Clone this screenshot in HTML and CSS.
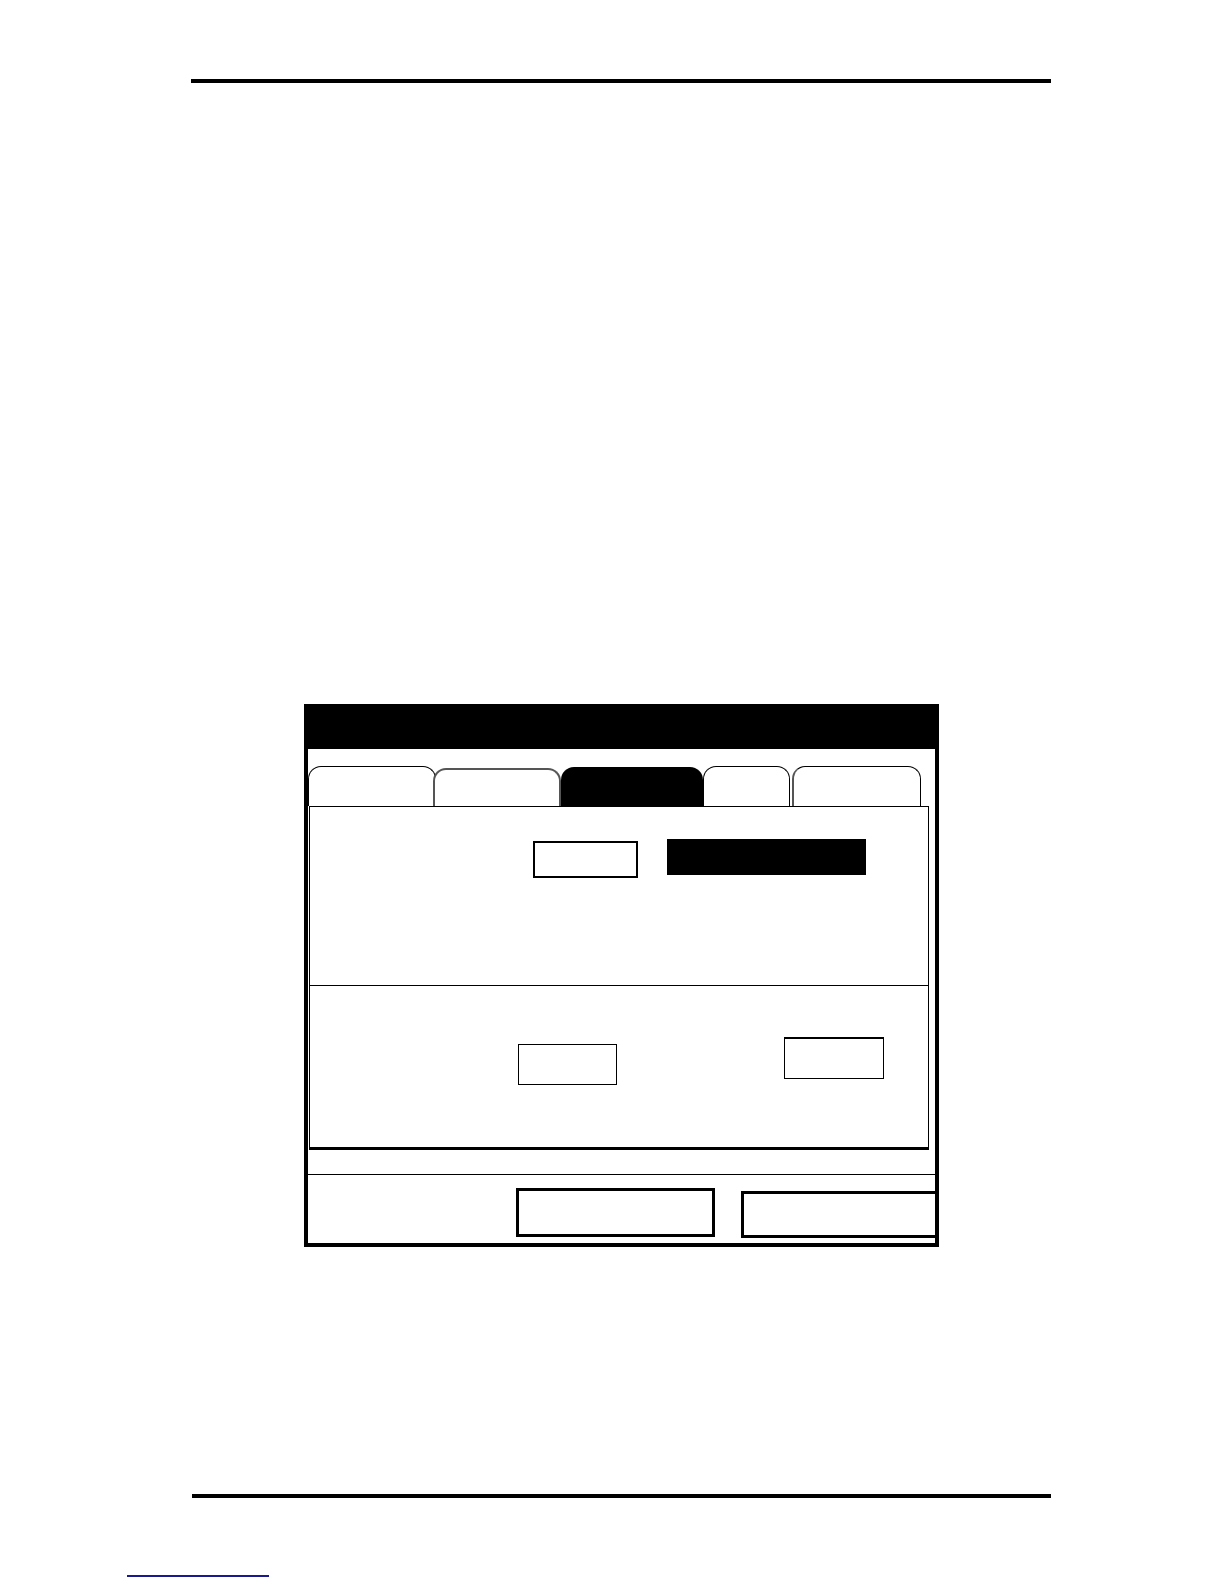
FILE: index.html
```html
<!DOCTYPE html>
<html lang="en">
<head>
<meta charset="utf-8">
<title>Dialog figure</title>
<link rel="stylesheet" href="styles.css">
</head>
<body>
<div class="page">
  <div class="rule rule-top"></div>
  <div class="dialog">
    <div class="title-bar"></div>
    <div class="frame">
      <div class="tabs">
        <div class="tab tab-1"></div>
        <div class="tab tab-2"></div>
        <div class="tab tab-3"></div>
        <div class="tab tab-4"></div>
        <div class="tab tab-5"></div>
      </div>
      <div class="panel">
        <div class="section upper">
          <div class="field field-1"></div>
          <div class="field-selected"></div>
        </div>
        <div class="section lower">
          <div class="field field-2"></div>
          <div class="field field-3"></div>
        </div>
      </div>
      <div class="status"></div>
      <div class="buttons">
        <div class="button button-1"></div>
        <div class="button button-2"></div>
      </div>
    </div>
  </div>
  <div class="rule rule-bottom"></div>
  <div class="link-line"></div>
</div>
</body>
</html>
```
FILE: styles.css
```css
* { box-sizing: border-box; }
html, body { margin: 0; padding: 0; background: #fff; }
body { font-family: "Liberation Sans", Arial, sans-serif; }
.page { width: 1224px; min-height: 1584px; padding-top: 79px; }

.rule { background: #000; }
.rule-top { margin-left: 191px; width: 860px; height: 4px; }
.rule-bottom { margin-top: 247px; margin-left: 192px; width: 859px; height: 3.5px; }
.link-line { margin-top: 77.5px; margin-left: 127px; width: 142px; height: 1.5px; background: #1a1a8e; }

.dialog { margin-top: 621px; margin-left: 304px; width: 635px; height: 543px; display: flex; flex-direction: column; }
.title-bar { height: 45px; background: #000; }
.frame { flex: 1; border: 4px solid #000; border-top: 0; display: flex; flex-direction: column; }

.tabs { height: 57px; display: flex; align-items: flex-end; }
.tab { height: 40px; border: 1.5px solid #000; border-bottom: 0; border-radius: 13px 13px 0 0; background: #fff; }
.tab-1 { width: 128px; }
.tab-2 { width: 128px; height: 38px; margin-left: -3px; border: 2px solid #555; border-bottom: 0; }
.tab-3 { width: 142px; height: 39px; background: #000; border: 0; }
.tab-4 { width: 87px; }
.tab-5 { width: 129px; margin-left: 2px; border-left: 2px solid #555; }

.panel { margin-left: 1px; width: 620px; height: 344px; border: 1px solid #000; border-right-width: 1.5px; border-bottom-width: 3px; display: flex; flex-direction: column; }
.section { display: flex; align-items: flex-start; }
.upper { height: 179px; border-bottom: 1.5px solid #000; padding-top: 34px; }
.lower { flex: 1; padding-top: 51px; }

.field { border: 1px solid #000; background: #fff; }
.field-1 { margin-left: 223px; width: 105px; height: 37px; border-width: 2px; }
.field-selected { margin-left: 29px; margin-top: -2px; width: 199px; height: 36px; background: #000; }
.field-2 { margin-left: 208px; margin-top: 7px; width: 99px; height: 41px; }
.field-3 { margin-left: 167px; width: 100px; height: 42px; border-top-width: 2px; }

.status { height: 25px; border-bottom: 1px solid #000; }
.buttons { flex: 1; display: flex; align-items: flex-start; overflow: hidden; }
.button { border: 3.5px solid #000; background: #fff; flex: none; }
.button-1 { margin-left: 208px; margin-top: 13px; width: 199px; height: 49px; }
.button-2 { margin-left: 26px; margin-top: 16px; width: 220px; height: 47px; }
```
